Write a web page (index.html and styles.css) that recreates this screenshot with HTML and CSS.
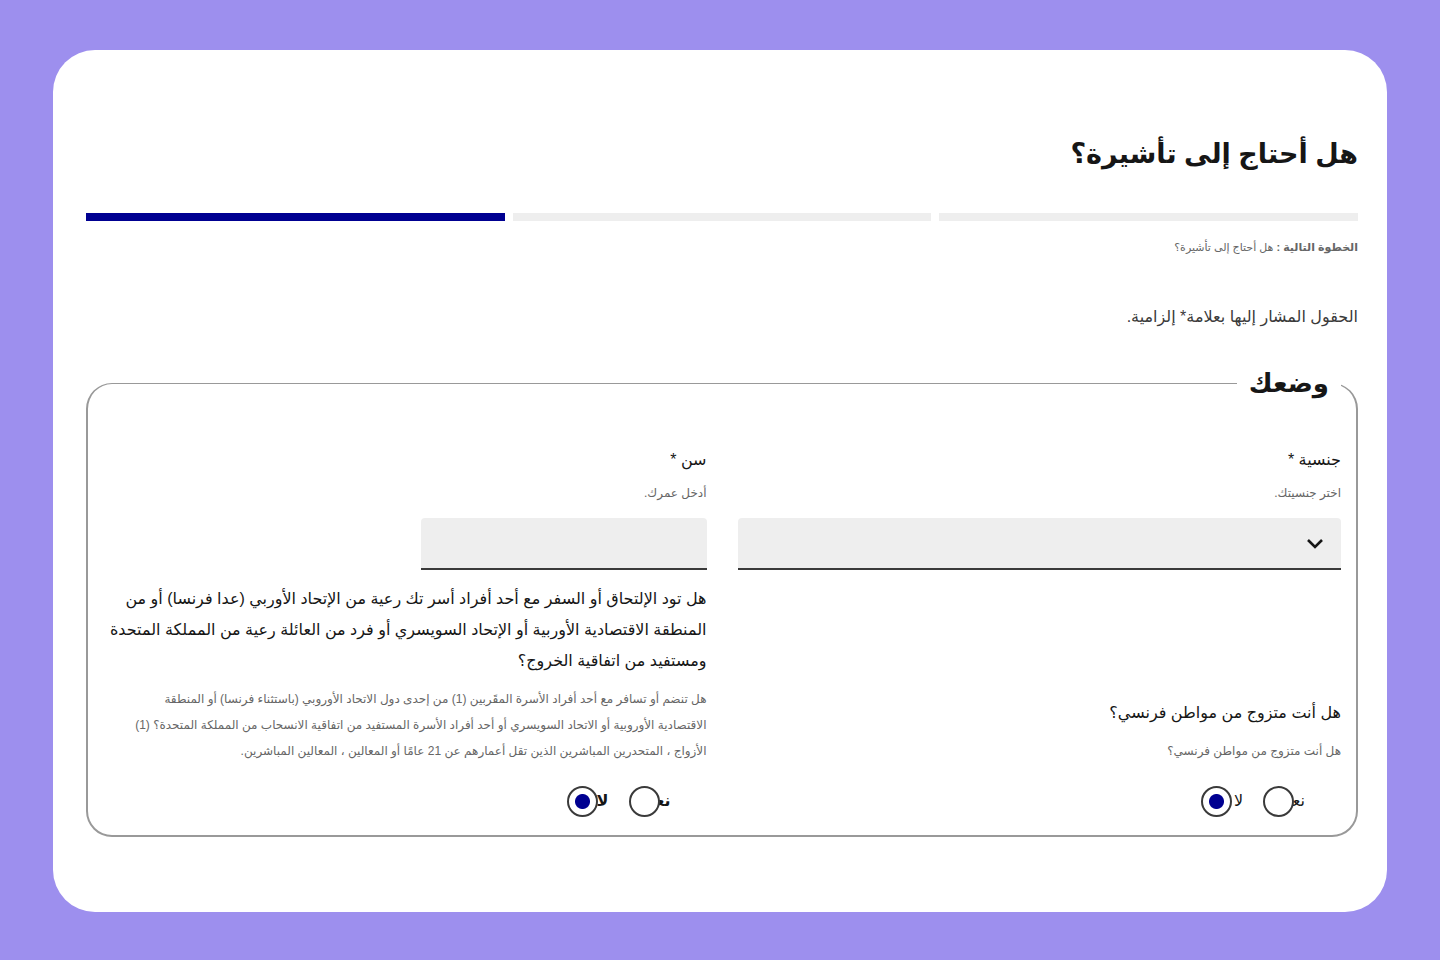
FILE: index.html
```html
<!DOCTYPE html>
<html lang="ar" dir="rtl">
<head>
  <meta charset="UTF-8">
  <meta name="viewport" content="width=device-width, initial-scale=1">
  <title>هل أحتاج إلى تأشيرة؟</title>
  <link rel="stylesheet" href="styles.css">
</head>
<body>

<main class="card">
  <h1>هل أحتاج إلى تأشيرة؟</h1>

  <!-- Steps -->
  <div class="steps">
    <span class="step"></span>
    <span class="step"></span>
    <span class="step active"></span>
  </div>
  <p class="next-step"><b>الخطوة التالية :</b> هل أحتاج إلى تأشيرة؟</p>

  <p class="required-note">الحقول المشار إليها بعلامة* إلزامية.</p>

  <!-- Visa form -->
  <form id="visa-form">
    <fieldset class="situation">
      <legend>وضعك</legend>
      <div class="fields">

        <div class="field">
          <label for="nationality">جنسية *</label>
          <p class="hint">اختر جنسيتك.</p>
          <div class="select-wrap">
            <select id="nationality" required>
              <option value=""></option>
            </select>
            <svg class="arrow" viewBox="0 0 18 12" aria-hidden="true"><path d="M2 2l7 7 7-7" fill="none" stroke="#161616" stroke-width="2.6"/></svg>
          </div>
        </div>

        <div class="field">
          <label for="age">سن *</label>
          <p class="hint">أدخل عمرك.</p>
          <input type="text" id="age" required>
        </div>

        <div class="field question" role="radiogroup" aria-labelledby="married-title">
          <p class="question-title" id="married-title">هل أنت متزوج من مواطن فرنسي؟</p>
          <p class="hint">هل أنت متزوج من مواطن فرنسي؟</p>
          <div class="radios">
            <label for="married-yes">نعم</label>
            <input type="radio" name="married" id="married-yes">
            <label for="married-no">لا</label>
            <input type="radio" name="married" id="married-no" checked>
          </div>
        </div>

        <div class="field question" role="radiogroup" aria-labelledby="family-title">
          <p class="question-title" id="family-title">هل تود الإلتحاق أو السفر مع أحد أفراد أسر تك رعية من الإتحاد الأوربي (عدا فرنسا) أو من<br>المنطقة الاقتصادية الأوربية أو الإتحاد السويسري أو فرد من العائلة رعية من المملكة المتحدة<br>ومستفيد من اتفاقية الخروج؟</p>
          <p class="hint">هل تنضم أو تسافر مع أحد أفراد الأسرة المقَربين (1) من إحدى دول الاتحاد الأوروبي (باستثناء فرنسا) أو المنطقة<br>الاقتصادية الأوروبية أو الاتحاد السويسري أو أحد أفراد الأسرة المستفيد من اتفاقية الانسحاب من المملكة المتحدة؟ (1)<br>الأزواج ، المتحدرين المباشرين الذين تقل أعمارهم عن 21 عامًا أو المعالين ، المعالين المباشرين.</p>
          <div class="radios bold">
            <label for="family-yes">نعم</label>
            <input type="radio" name="family" id="family-yes">
            <label for="family-no">لا</label>
            <input type="radio" name="family" id="family-no" checked>
          </div>
        </div>

      </div>
    </fieldset>
  </form>
</main>

</body>
</html>
```
FILE: styles.css
```css
* {
  box-sizing: border-box;
}

body {
  font-family: "Liberation Sans", "DejaVu Sans", sans-serif;
  background-color: #9d8fee;
  color: #161616;
  margin: 0;
  padding: 50px 53px 49px;
}

.card {
  background-color: white;
  border-radius: 42px;
  padding: 80px 29px 75px 33px;
}

h1 {
  font-size: 27px;
  line-height: 48px;
  margin: 0 0 35px;
}

p {
  margin: 0;
}

.steps {
  display: flex;
  gap: 8px;
}

.step {
  flex: 1;
  height: 8px;
  background-color: #eee;
}

.step.active {
  background-color: #000091;
}

.next-step {
  font-size: 11px;
  line-height: 24px;
  color: #666;
  margin-top: 14px;
}

.required-note {
  font-size: 16px;
  line-height: 32px;
  color: #3a3a3a;
  margin-top: 42px;
}

.situation {
  border: 2px solid #999;
  border-top-width: 1px;
  border-radius: 26px;
  margin: 30px 0 0;
  padding: 41px 15px 18px;
  min-width: 0;
}

legend {
  font-size: 26px;
  font-weight: bold;
  line-height: 40px;
  padding: 0 12px;
}

.fields {
  display: grid;
  grid-template-columns: 1fr 1fr;
  column-gap: 31px;
  row-gap: 13px;
  align-items: end;
}

.field > label {
  display: block;
  font-size: 16px;
  line-height: 32px;
}

.hint {
  font-size: 12px;
  line-height: 26px;
  color: #666;
}

.field > .hint {
  margin-top: 4px;
}

.select-wrap {
  position: relative;
  margin-top: 12px;
}

select, input[type="text"] {
  display: block;
  appearance: none;
  height: 52px;
  background-color: #eee;
  border: none;
  border-bottom: 2px solid #3a3a3a;
  border-radius: 4px 4px 0 0;
  padding: 0 16px;
  font-size: 16px;
}

select {
  width: 100%;
}

input[type="text"] {
  width: 286px;
  margin-top: 12px;
}

.arrow {
  position: absolute;
  right: 17px;
  top: 20px;
  width: 18px;
  height: 12px;
  pointer-events: none;
}

.question-title {
  font-size: 16px;
  line-height: 31px;
}

.question > .hint {
  margin-top: 10px;
}

.radios {
  display: flex;
  align-items: center;
  margin-top: 21px;
  padding-right: 36px;
}

/* labels are narrower than their text, so the circle covers the end */
.radios label {
  flex: none;
  width: 11px;
  font-size: 16px;
  line-height: 32px;
  white-space: nowrap;
}

.radios.bold label {
  font-weight: bold;
}

input[type="radio"] {
  appearance: none;
  flex: none;
  position: relative;
  width: 31px;
  height: 31px;
  margin: 0 0 0 20px;
  background-color: white;
  border: 2px solid #3a3a3a;
  border-radius: 50%;
}

input[type="radio"]:checked {
  background-image: radial-gradient(circle, #000091 7px, transparent 8px);
}
```
